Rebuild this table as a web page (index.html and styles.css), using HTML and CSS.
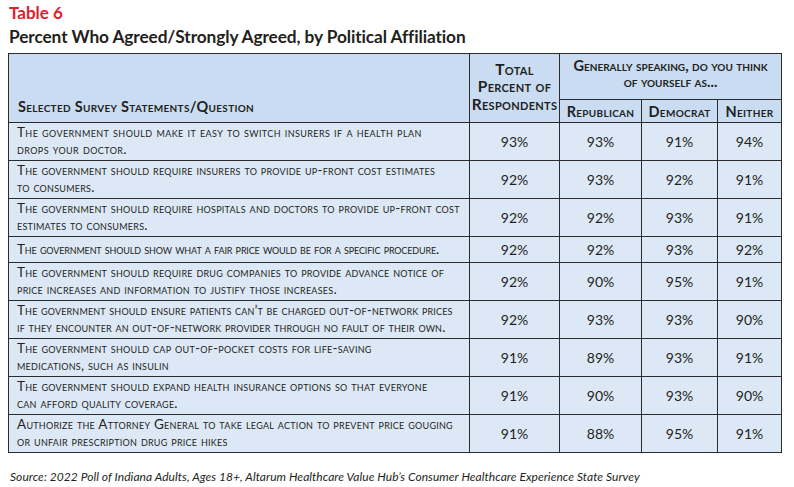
FILE: index.html
```html
<!DOCTYPE html>
<html lang="en">
<head>
<meta charset="utf-8">
<title>Table 6</title>
<link rel="stylesheet" href="styles.css">
</head>
<body>
<div class="page">
  <div class="label">Table 6</div>
  <h1 class="title">Percent Who Agreed/Strongly Agreed, by Political Affiliation</h1>
  <table class="survey">
    <colgroup>
      <col class="c-stmt"><col class="c-total"><col class="c-rep"><col class="c-dem"><col class="c-nei">
    </colgroup>
    <thead>
      <tr class="h1">
        <th rowspan="2" class="stmt-head">Selected Survey Statements/Question</th>
        <th rowspan="2" class="total-head">Total<br>Percent of<br>Respondents</th>
        <th colspan="3" class="group-head">Generally speaking, do you think<br>of yourself as...</th>
      </tr>
      <tr class="h2">
        <th>Republican</th>
        <th>Democrat</th>
        <th>Neither</th>
      </tr>
    </thead>
    <tbody>
      <tr><td class="stmt wide">The government should make it easy to switch insurers if a health plan<br>drops your doctor.</td><td>93%</td><td>93%</td><td>91%</td><td>94%</td></tr>
      <tr><td class="stmt">The government should require insurers to provide up-front cost estimates<br>to consumers.</td><td>92%</td><td>93%</td><td>92%</td><td>91%</td></tr>
      <tr><td class="stmt">The government should require hospitals and doctors to provide up-front cost<br>estimates to consumers.</td><td>92%</td><td>92%</td><td>93%</td><td>91%</td></tr>
      <tr class="single"><td class="stmt narrow">The government should show what a fair price would be for a specific procedure.</td><td>92%</td><td>92%</td><td>93%</td><td>92%</td></tr>
      <tr><td class="stmt">The government should require drug companies to provide advance notice of<br>price increases and information to justify those increases.</td><td>92%</td><td>90%</td><td>95%</td><td>91%</td></tr>
      <tr><td class="stmt tight">The government should ensure patients can’t be charged out-of-network prices<br>if they encounter an out-of-network provider through no fault of their own.</td><td>92%</td><td>93%</td><td>93%</td><td>90%</td></tr>
      <tr><td class="stmt">The government should cap out-of-pocket costs for life-saving<br>medications, such as insulin</td><td>91%</td><td>89%</td><td>93%</td><td>91%</td></tr>
      <tr><td class="stmt">The government should expand health insurance options so that everyone<br>can afford quality coverage.</td><td>91%</td><td>90%</td><td>93%</td><td>90%</td></tr>
      <tr><td class="stmt">Authorize the Attorney General to take legal action to prevent price gouging<br>or unfair prescription drug price hikes</td><td>91%</td><td>88%</td><td>95%</td><td>91%</td></tr>
    </tbody>
  </table>
  <p class="source">Source: 2022 Poll of Indiana Adults, Ages 18+, Altarum Healthcare Value Hub’s Consumer Healthcare Experience State Survey</p>
</div>
</body>
</html>
```
FILE: styles.css
```css
html, body {
  margin: 0;
  padding: 0;
  background: #ffffff;
}
body {
  font-family: "Lato", "DejaVu Sans", sans-serif;
  color: #231f20;
}
.page {
  padding: 3px 0 0 8px;
  width: 774px;
}
.label {
  color: #e2202b;
  font-weight: 700;
  font-size: 17px;
  line-height: 20px;
  padding-left: 1px;
}
.title {
  margin: 3px 0 0 1px;
  font-size: 17.3px;
  line-height: 22px;
  font-weight: 700;
  letter-spacing: -0.1px;
}
.survey {
  margin-top: 5px;
  border-collapse: collapse;
  width: 773px;
  table-layout: fixed;
}
.c-stmt { width: 461px; }
.c-total { width: 90px; }
.c-rep { width: 82px; }
.c-dem { width: 76px; }
.c-nei { width: 64px; }
.survey th, .survey td {
  border: 1px solid #2b2b2b;
  padding: 0;
}
.survey thead th {
  background: #c9dcf1;
  font-variant: small-caps;
  font-weight: 700;
  font-size: 14.5px;
  letter-spacing: 0.3px;
  color: #231f20;
  white-space: nowrap;
}
.h1 { height: 46px; }
.h2 { height: 23px; }
.survey thead th.stmt-head {
  text-align: left;
  vertical-align: bottom;
  padding: 0 0 7px 9px;
}
.survey thead th.total-head {
  font-size: 15.5px;
  letter-spacing: 0.3px;
  line-height: 17.5px;
  vertical-align: bottom;
  padding-bottom: 9px;
}
.survey thead th.group-head {
  letter-spacing: 0;
  line-height: 15.5px;
  vertical-align: middle;
  padding-bottom: 6px;
}
.h2 th {
  vertical-align: middle;
}
.survey tbody tr {
  height: 38px;
}
.survey tbody tr.single {
  height: 26px;
}
.survey tbody td {
  background: #dde8f6;
  text-align: center;
  vertical-align: middle;
  font-size: 14px;
}
.survey tbody td.stmt {
  text-align: left;
  font-variant: small-caps;
  font-size: 13.5px;
  line-height: 17px;
  padding: 0 4px 1px 8px;
  white-space: nowrap;
  letter-spacing: 0.25px;
}
.survey tbody td.stmt.wide {
  letter-spacing: 0.4px;
}
.survey tbody td.stmt.tight {
  letter-spacing: 0.15px;
}
.survey tbody td.stmt.narrow {
  letter-spacing: -0.15px;
}
.source {
  margin: 16px 0 0 2px;
  font-style: italic;
  font-size: 12px;
  letter-spacing: 0.05px;
}
```
